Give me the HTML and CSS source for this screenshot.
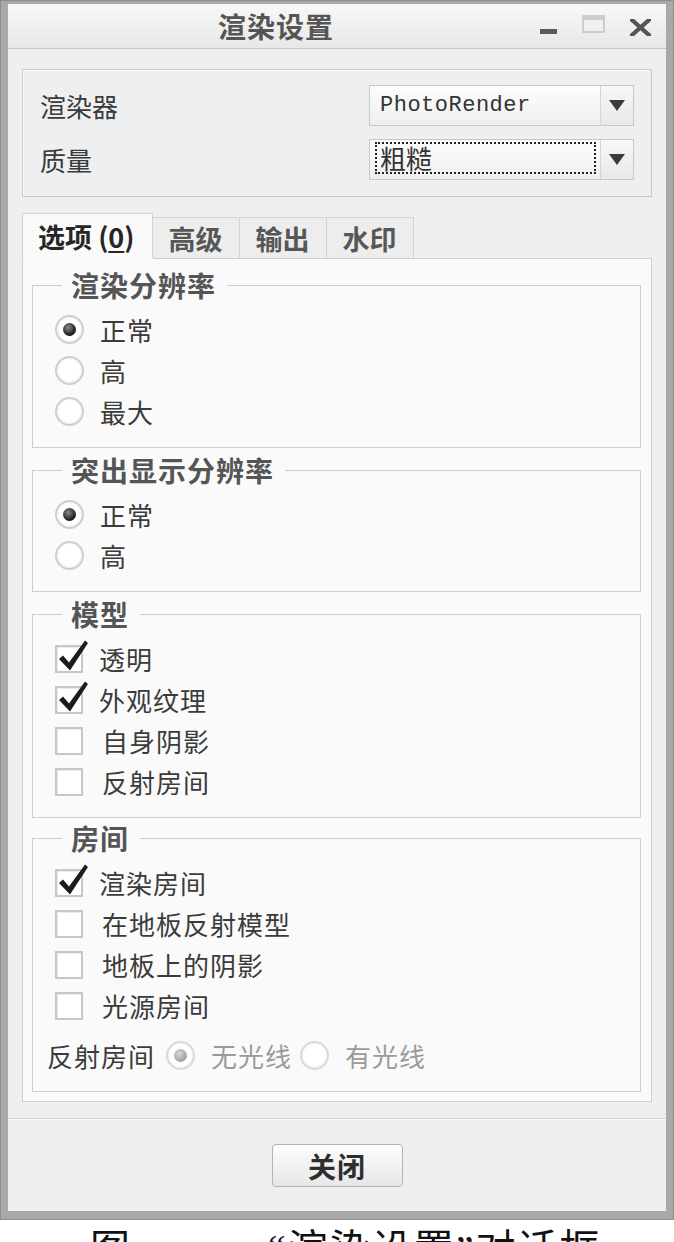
FILE: index.html
```html
<!DOCTYPE html>
<html lang="zh-CN">
<head>
<meta charset="utf-8">
<title>渲染设置</title>
<link rel="stylesheet" href="styles.css">
</head>
<body>
<div class="window">
  <div class="titlebar">
    <div class="title">渲染设置</div>
    <div class="controls">
      <svg class="ctl-min" width="17" height="6" viewBox="0 0 17 6"><rect x="0" y="0" width="17" height="5" fill="#5a5a5a"/></svg>
      <svg class="ctl-max" width="23" height="18" viewBox="0 0 23 18"><rect x="1" y="1" width="21" height="16" fill="none" stroke="#cdcdcd" stroke-width="2"/><rect x="1" y="1" width="21" height="4" fill="#cdcdcd"/></svg>
      <svg class="ctl-close" width="21" height="17" viewBox="0 0 21 17"><path d="M2 1 L19 16 M19 1 L2 16" stroke="#555" stroke-width="4.2" stroke-linecap="square"/></svg>
    </div>
  </div>

  <div class="body">
    <div class="topgroup">
      <div class="field-row">
        <span class="field-label">渲染器</span>
        <div class="combo">
          <div class="combo-val mono">PhotoRender</div>
          <div class="combo-btn"><span class="tri"></span></div>
        </div>
      </div>
      <div class="field-row">
        <span class="field-label">质量</span>
        <div class="combo">
          <div class="combo-val"><span class="focus">粗糙</span></div>
          <div class="combo-btn"><span class="tri"></span></div>
        </div>
      </div>
    </div>

    <div class="tabs">
      <div class="tab active">选项 (<u>0</u>)</div>
      <div class="tab">高级</div>
      <div class="tab">输出</div>
      <div class="tab">水印</div>
    </div>

    <div class="panel">
      <fieldset class="group">
        <legend>渲染分辨率</legend>
        <div class="opt"><span class="radio checked"></span><span>正常</span></div>
        <div class="opt"><span class="radio"></span><span>高</span></div>
        <div class="opt"><span class="radio"></span><span>最大</span></div>
      </fieldset>

      <fieldset class="group">
        <legend>突出显示分辨率</legend>
        <div class="opt"><span class="radio checked"></span><span>正常</span></div>
        <div class="opt"><span class="radio"></span><span>高</span></div>
      </fieldset>

      <fieldset class="group">
        <legend>模型</legend>
        <div class="opt"><span class="check on"><svg viewBox="0 0 36 36" width="36" height="36"><polygon points="4,22 8,18.5 14,25.5 30,3.5 33,6 15,33.5" fill="#1c1c1c"/></svg></span><span>透明</span></div>
        <div class="opt"><span class="check on"><svg viewBox="0 0 36 36" width="36" height="36"><polygon points="4,22 8,18.5 14,25.5 30,3.5 33,6 15,33.5" fill="#1c1c1c"/></svg></span><span>外观纹理</span></div>
        <div class="opt"><span class="check"></span><span class="sp">自身阴影</span></div>
        <div class="opt"><span class="check"></span><span class="sp">反射房间</span></div>
      </fieldset>

      <fieldset class="group last">
        <legend>房间</legend>
        <div class="opt"><span class="check on"><svg viewBox="0 0 36 36" width="36" height="36"><polygon points="4,22 8,18.5 14,25.5 30,3.5 33,6 15,33.5" fill="#1c1c1c"/></svg></span><span>渲染房间</span></div>
        <div class="opt"><span class="check"></span><span class="sp">在地板反射模型</span></div>
        <div class="opt"><span class="check"></span><span class="sp">地板上的阴影</span></div>
        <div class="opt"><span class="check"></span><span class="sp">光源房间</span></div>
        <div class="opt inline-row">
          <span class="row-label">反射房间</span>
          <span class="radio checked disabled"></span><span class="dim">无光线</span>
          <span class="radio disabled second"></span><span class="dim">有光线</span>
        </div>
      </fieldset>
    </div>
  </div>

  <div class="footer">
    <button class="btn" type="button">关闭</button>
  </div>
</div>

<div class="caption"><span>图</span><span class="cap-rest">“渲染设置”对话框</span></div>
</body>
</html>
```

FILE: styles.css
```css
* { box-sizing: border-box; }

html, body {
  margin: 0;
  padding: 0;
  background: #ffffff;
}

body {
  font-family: "Noto Sans CJK SC", "Noto Sans", sans-serif;
  color: #3a3a3a;
  width: 674px;
  overflow: hidden;
}

.window {
  width: 674px;
  border: 1px solid #8c8c8c;
  background: #a9a9a9;
  padding: 3px 7px 8px 7px;
}

/* ---------- title bar ---------- */
.titlebar {
  height: 45px;
  display: flex;
  align-items: center;
  background: linear-gradient(#f8f8f8, #e7e7e7);
  border-bottom: 1px solid #c6c6c6;
}

.title {
  flex: 1;
  text-align: center;
  font-size: 28px;
  font-weight: 700;
  color: #555;
  letter-spacing: 1px;
  line-height: 44px;
  padding-left: 4px;
}

.controls {
  display: flex;
  align-items: center;
  gap: 25px;
  padding-right: 15px;
  height: 44px;
}

.ctl-min { margin-top: 12px; }
.ctl-max { margin-top: -4px; }
.ctl-close { margin-top: 2px; }

/* ---------- body ---------- */
.body {
  background: #eeeff1;
  padding: 20px 14px 16px 14px;
  border-bottom: 1px solid #d2d2d2;
}

.topgroup {
  border: 1px solid #c9c9c9;
  box-shadow: inset 1px 1px 0 #fafafa;
  padding: 15px 17px 16px 17px;
  display: flex;
  flex-direction: column;
  gap: 13px;
}

.field-row {
  display: flex;
  align-items: center;
  justify-content: space-between;
  height: 41px;
}

.field-label {
  font-size: 26px;
  color: #3a3a3a;
}

.combo {
  width: 265px;
  height: 41px;
  display: flex;
  border: 1px solid #c8c8c8;
  background: linear-gradient(#fdfdfd, #efefef);
}

.combo-val {
  flex: 1;
  display: flex;
  align-items: center;
  padding-left: 10px;
  font-size: 26px;
  color: #333;
}

.combo-val.mono {
  font-family: "Liberation Mono", monospace;
  font-size: 22px;
  letter-spacing: 0.5px;
}

.combo-val .focus {
  flex: 1;
  align-self: stretch;
  margin: 2px 4px 5px -5px;
  border: 2px dotted #222;
  display: flex;
  align-items: center;
  padding-left: 3px;
  line-height: 1;
}

.combo-btn {
  width: 33px;
  border-left: 1px solid #d5d5d5;
  background: linear-gradient(#f7f7f7, #e8e8e8);
  display: flex;
  align-items: center;
  justify-content: center;
}

.tri {
  width: 0;
  height: 0;
  border-left: 8px solid transparent;
  border-right: 8px solid transparent;
  border-top: 11px solid #3b3b3b;
}

/* ---------- tabs ---------- */
.tabs {
  display: flex;
  align-items: flex-end;
  margin-top: 16px;
  margin-bottom: -1px;
  position: relative;
  z-index: 1;
}

.tab {
  height: 42px;
  padding: 0 16px;
  display: flex;
  align-items: center;
  font-size: 27px;
  font-weight: 700;
  color: #575757;
  background: #ededee;
  border: 1px solid #d3d3d3;
  border-left: none;
  border-bottom: 1px solid #cfcfcf;
  line-height: 1;
}

.tab.active {
  height: 46px;
  padding: 0 17px 0 15px;
  color: #262626;
  background: #fafafa;
  border-left: 1px solid #cfcfcf;
  border-bottom: 1px solid #fafafa;
}

.tab u { text-underline-offset: 3px; text-decoration-thickness: 2px; }

.panel {
  background: #fafafa;
  border: 1px solid #cfcfcf;
  padding: 10px 10px 9px 9px;
}

/* ---------- groups ---------- */
.group {
  margin: 6px 0 0 0;
  border: 1px solid #cdcdcd;
  padding: 8px 0 15px 22px;
  min-width: 0;
}

.group:first-child { margin-top: 0; }
.group.last { margin-top: 4px; }

.group legend {
  margin-left: 7px;
  padding: 0 11px 0 9px;
  font-size: 28px;
  font-weight: 700;
  line-height: 32px;
  color: #555;
  letter-spacing: 1px;
}

.opt {
  display: flex;
  align-items: center;
  height: 41px;
  font-size: 26px;
  color: #3b3b3b;
  letter-spacing: 1px;
}

.radio {
  width: 29px;
  height: 29px;
  border-radius: 50%;
  border: 2px solid #cfcfcf;
  background: radial-gradient(circle at 50% 45%, #ffffff 55%, #eeeeee 100%);
  box-shadow: inset 0 0 2px #e2e2e2;
  margin-right: 16px;
  display: flex;
  align-items: center;
  justify-content: center;
  flex: none;
}

.radio.checked::after {
  content: "";
  width: 13px;
  height: 13px;
  border-radius: 50%;
  background: radial-gradient(circle at 40% 35%, #8a8a8a, #141414 70%);
}

.radio.disabled { border-color: #dadada; }
.radio.disabled.checked::after {
  background: radial-gradient(circle at 40% 35%, #d8d8d8, #9c9c9c 75%);
}

.check {
  width: 28px;
  height: 28px;
  border: 2px solid #c7c7c7;
  background: #ffffff;
  box-shadow: inset 1px 1px 0 #ececec;
  margin-right: 16px;
  position: relative;
  flex: none;
}

.check svg {
  position: absolute;
  left: -2px;
  top: -10px;
}

.sp { margin-left: 3px; }

.group.last .inline-row {
  margin-top: 9px;
  margin-left: -8px;
}

.row-label { margin-right: 11px; }
.dim { color: #9a9a9a; }
.radio.second { margin-left: 8px; }

/* ---------- footer ---------- */
.footer {
  background: #eeeff1;
  border-top: 1px solid #fbfbfb;
  padding: 24px 0 24px 0;
  display: flex;
  justify-content: center;
}

.btn {
  width: 131px;
  height: 43px;
  border: 1px solid #b3b3b3;
  border-radius: 4px;
  background: linear-gradient(#fdfdfd, #e7e7e7);
  font-family: "Noto Sans CJK SC", sans-serif;
  font-size: 28px;
  font-weight: 700;
  color: #2e2e2e;
  letter-spacing: 1px;
  padding: 0;
  line-height: 1;
}

/* ---------- caption ---------- */
.caption {
  display: flex;
  padding-left: 90px;
  margin-top: 6px;
  font-family: "Liberation Serif", "Noto Sans CJK SC", serif;
  font-size: 40px;
  line-height: 48px;
  color: #111;
}

.cap-rest { margin-left: 138px; letter-spacing: 2px; }
```
